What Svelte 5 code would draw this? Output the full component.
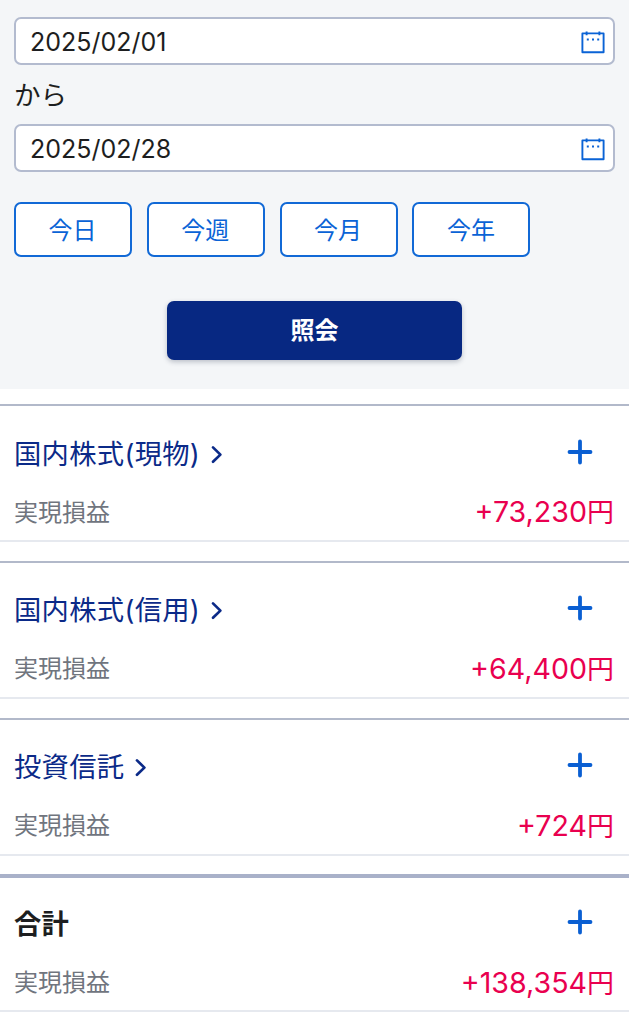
<script>
  let from = "2025/02/01";
  let to = "2025/02/28";

  const periods = ["今日", "今週", "今月", "今年"];

  const items = [
    { name: "国内株式(現物)", amount: "+73,230", link: true },
    { name: "国内株式(信用)", amount: "+64,400", link: true },
    { name: "投資信託", amount: "+724", link: true },
    { name: "合計", amount: "+138,354", link: false },
  ];
</script>

{#snippet calendar()}
  <svg class="calendar" width="24" height="24" viewBox="0 0 24 24">
    <path d="M1.4 3.4h21.2v18.8H1.4zM5.6 1.6v3.6M18.4 1.6v3.6" fill="none" stroke="#0a63d6" stroke-width="1.9" stroke-linejoin="round" />
    <path d="M5.8 8.6h2v2h-2zM11 8.6h2v2h-2zM16.2 8.6h2v2h-2z" fill="#0a63d6" />
  </svg>
{/snippet}

<div class="page">
  <form class="search">
    <div class="field">
      <span class="date">{from}</span>
      {@render calendar()}
    </div>
    <p class="between">から</p>
    <div class="field">
      <span class="date">{to}</span>
      {@render calendar()}
    </div>

    <div class="periods">
      {#each periods as period}
        <button type="button" class="period">{period}</button>
      {/each}
    </div>

    <button type="button" class="submit">照会</button>
  </form>

  {#each items as item}
    <section class="card" class:total={!item.link}>
      <div class="row head">
        <h2 class="name">
          {item.name}
          {#if item.link}
            <svg class="chevron" width="12" height="20" viewBox="0 0 12 20">
              <path d="M2 2.4l7.4 7.2L2 16.8" fill="none" stroke="#0b2a88" stroke-width="2.7" stroke-linecap="round" stroke-linejoin="round" />
            </svg>
          {/if}
        </h2>
        <svg class="plus" width="26" height="26" viewBox="0 0 26 26">
          <path d="M13 2.5v21M2.5 13h21" stroke="#0a5fd2" stroke-width="3.8" stroke-linecap="round" />
        </svg>
      </div>
      <div class="row body">
        <span class="label">実現損益</span>
        <span class="amount">{item.amount}<span class="yen">円</span></span>
      </div>
    </section>
  {/each}
</div>

<style>
  :global(body) {
    margin: 0;
    background: #fff;
  }

  .page {
    height: 1024px;
    overflow: hidden;
    font-family: Inter, "Noto Sans CJK JP", sans-serif;
    color: #1d1e20;
  }

  .search {
    box-sizing: border-box;
    height: 389px;
    padding: 17px 14px 0;
    background: #f4f6f8;
  }

  .field {
    box-sizing: border-box;
    height: 48px;
    padding: 1px 8px 0 14px;
    display: flex;
    align-items: center;
    justify-content: space-between;
    border: 2px solid #b3bbcf;
    border-radius: 7px;
    background: #fff;
  }

  .date {
    padding-top: 1px;
    font-size: 25px;
    line-height: 42px;
  }

  .between {
    box-sizing: border-box;
    height: 59px;
    margin: 0;
    padding-top: 1px;
    font-size: 26.5px;
    line-height: 59px;
  }

  .periods {
    display: flex;
    gap: 14.8px;
    margin-top: 30px;
  }

  .period {
    box-sizing: border-box;
    width: 118px;
    height: 55px;
    padding: 0 1px 2px 0;
    border: 2px solid #1169d6;
    border-radius: 7px;
    background: #fff;
    color: #0a63d6;
    font-family: inherit;
    font-size: 24px;
  }

  .submit {
    display: block;
    width: 295px;
    height: 59px;
    margin: 44px auto 0;
    padding: 0 0 5px;
    border: 0;
    border-radius: 7px;
    background: #072882;
    box-shadow: 0 2px 5px rgba(20, 30, 60, 0.25);
    color: #fff;
    font-family: inherit;
    font-size: 24px;
    font-weight: 700;
  }

  .card {
    box-sizing: border-box;
    height: 138px;
    margin-top: 18.8px;
    padding: 28.7px 15px 0 14px;
    border-top: 2px solid #b2b9ca;
    border-bottom: 2px solid #e6e9ef;
  }

  .search + .card {
    margin-top: 15px;
  }

  .card.total {
    padding-top: 27px;
    border-top: 4px solid #a9b1c9;
  }

  .row {
    display: flex;
    align-items: center;
    justify-content: space-between;
  }

  .head {
    height: 40px;
    padding-right: 21px;
  }

  .name {
    display: flex;
    align-items: center;
    gap: 11px;
    margin: 0;
    font-size: 27.3px;
    font-weight: 400;
    line-height: 40px;
    letter-spacing: 0.3px;
    color: #0b2a88;
  }

  .total .name {
    font-weight: 700;
    color: #1d1e20;
  }

  .plus {
    margin-bottom: 6px;
  }

  .body {
    height: 40px;
    margin-top: 18px;
  }

  .label {
    font-size: 24px;
    line-height: 40px;
    color: #70757e;
  }

  .amount {
    font-size: 28.6px;
    line-height: 40px;
    color: #e9004f;
  }

  .yen {
    font-size: 27px;
  }
</style>
